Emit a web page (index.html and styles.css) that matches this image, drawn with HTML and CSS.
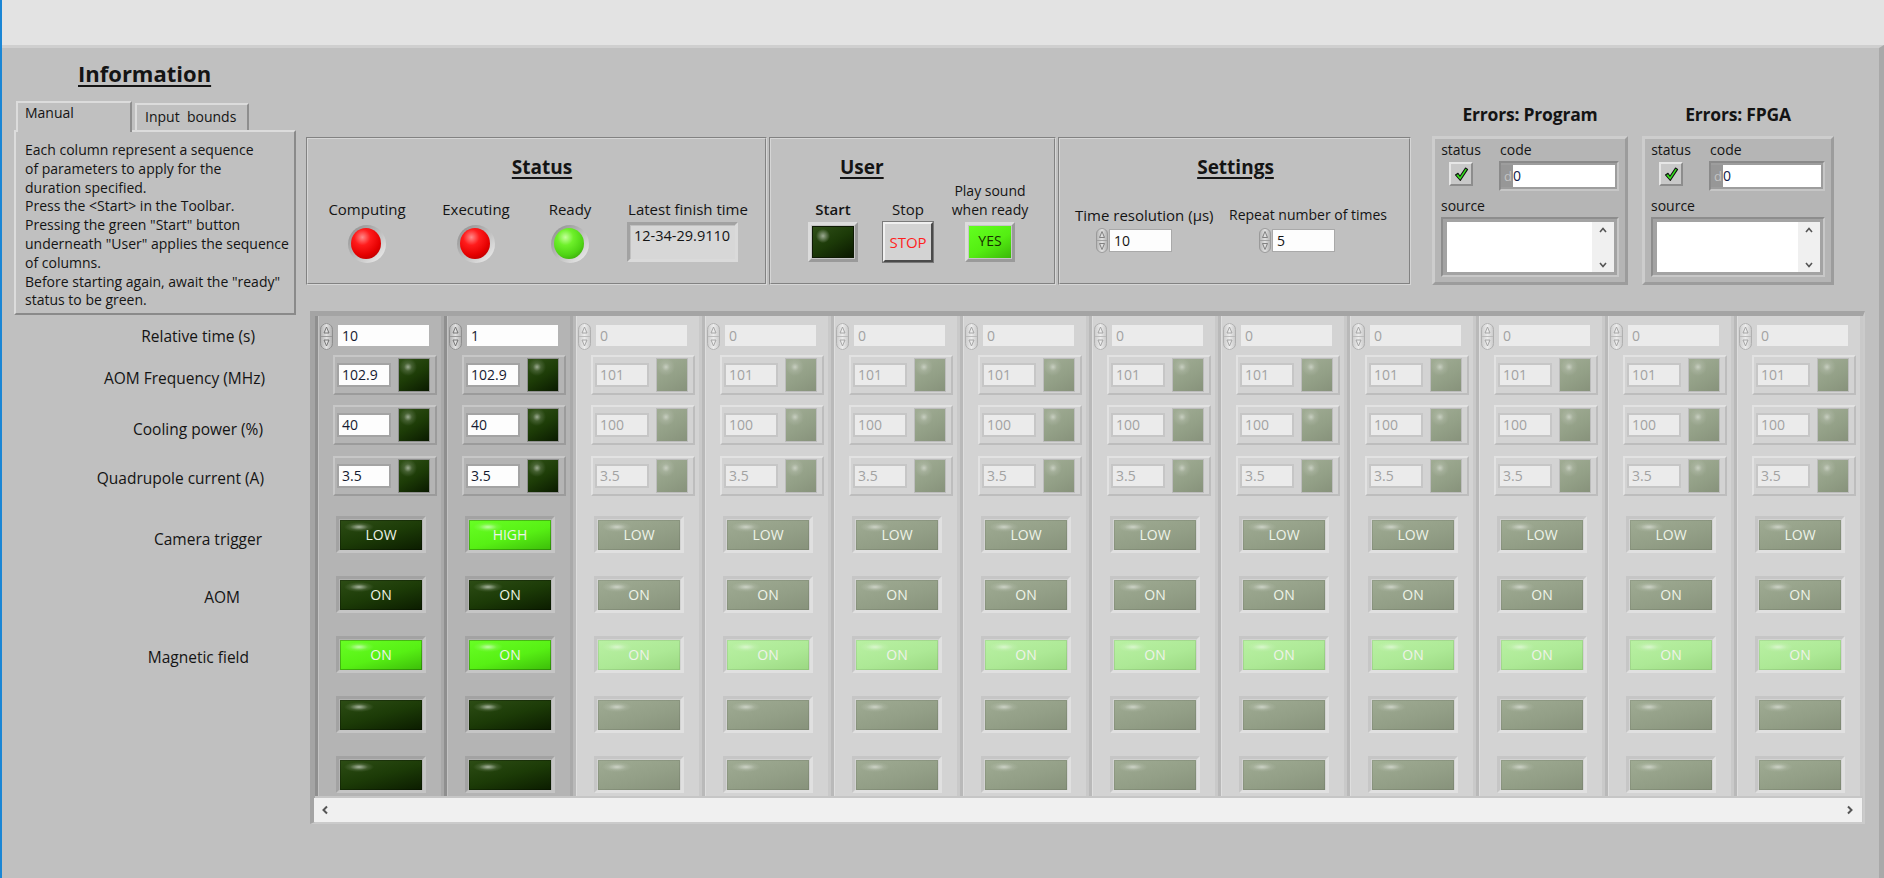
FILE: index.html
```html
<!DOCTYPE html>
<html>
<head>
<meta charset="utf-8">
<title>Sequencer</title>
<link rel="stylesheet" href="styles.css">
</head>
<body>
<div class="edge"></div>
<div class="app">
  <div class="titlebar"></div>
  <div class="panel">
    <div class="top">
      <section class="info">
        <h1>Information</h1>
        <div class="tabs">
          <div class="tab active">Manual</div>
          <div class="tab inactive">Input&nbsp; bounds</div>
        </div>
        <div class="tabpanel">Each column represent a sequence<br>of parameters to apply for the<br>duration specified.<br>Press the &lt;Start&gt; in the Toolbar.<br>Pressing the green "Start" button<br>underneath "User" applies the sequence<br>of columns.<br>Before starting again, await the "ready"<br>status to be green.</div>
      </section>

      <div class="groups">
        <section class="group status">
          <h2>Status</h2>
          <div class="status-items">
            <div class="sitem w1"><div class="slabel">Computing</div><div class="bezel"><div class="led red"></div></div></div>
            <div class="sitem w2"><div class="slabel">Executing</div><div class="bezel"><div class="led red"></div></div></div>
            <div class="sitem w3"><div class="slabel">Ready</div><div class="bezel"><div class="led green"></div></div></div>
            <div class="sitem w4"><div class="slabel">Latest finish time</div><div class="display">12-34-29.9110</div></div>
          </div>
        </section>
        <section class="group user">
          <h2>User</h2>
          <div class="user-items">
            <div class="uitem u1"><div class="ulabel"><span class="strong">Start</span></div><div class="ubtn startbtn"><div class="startface"></div></div></div>
            <div class="uitem u2"><div class="ulabel">Stop</div><div class="ubtn stopbtn">STOP</div></div>
            <div class="uitem u3"><div class="ulabel small">Play sound<br>when ready</div><div class="ubtn yesbtn"><div class="yesface">YES</div></div></div>
          </div>
        </section>
        <section class="group settings">
          <h2>Settings</h2>
          <div class="set-items">
            <div class="setcell a">
              <div class="setlabel">Time resolution (µs)</div>
              <div class="spinctl"><span class="spin sm"><svg width="12" height="25" viewBox="0 0 12 25"><rect x=".5" y=".5" width="11" height="24" rx="5.5" fill="none" stroke="#9a9a9a"/><path d="M6 3.5 L8.5 9.5 H3.5 Z M6 21.5 L8.5 15.5 H3.5 Z" fill="none" stroke="#777" stroke-width=".9"/><path d="M1 12.5 H11" stroke="#a2a2a2"/></svg></span><div class="setfield">10</div></div>
            </div>
            <div class="setcell b">
              <div class="setlabel narrow">Repeat number of times</div>
              <div class="spinctl"><span class="spin sm"><svg width="12" height="25" viewBox="0 0 12 25"><rect x=".5" y=".5" width="11" height="24" rx="5.5" fill="none" stroke="#9a9a9a"/><path d="M6 3.5 L8.5 9.5 H3.5 Z M6 21.5 L8.5 15.5 H3.5 Z" fill="none" stroke="#777" stroke-width=".9"/><path d="M1 12.5 H11" stroke="#a2a2a2"/></svg></span><div class="setfield">5</div></div>
            </div>
          </div>
        </section>
      </div>

      <div class="errors">
        <section class="err e1">
          <div class="errtitle">Errors: Program</div>
          <div class="errbox">
            <div class="errtop">
              <div class="stcol"><div class="elabel">status</div><div class="check"><svg width="16" height="16" viewBox="0 0 16 16"><path d="M2.5 9 L5 7.3 L7 10.3 L12.5 2 L14.6 3.4 L7.3 14.5 Z" fill="#33e41c" stroke="#111" stroke-width="1.1" stroke-linejoin="round"/></svg></div></div>
              <div class="codecol"><div class="elabel">code</div><div class="codefield"><span class="radix">d</span><span class="codeval">0</span></div></div>
            </div>
            <div class="elabel src">source</div>
            <div class="srcframe"><div class="srcwhite"></div><div class="srcscroll"><svg width="10" height="8" viewBox="0 0 10 8"><path d="M2 6 L5 2.5 L8 6" fill="none" stroke="#555" stroke-width="1.6"/></svg><svg width="10" height="8" viewBox="0 0 10 8"><path d="M2 2 L5 5.5 L8 2" fill="none" stroke="#555" stroke-width="1.6"/></svg></div></div>
          </div>
        </section>
        <section class="err e2">
          <div class="errtitle">Errors: FPGA</div>
          <div class="errbox">
            <div class="errtop">
              <div class="stcol"><div class="elabel">status</div><div class="check"><svg width="16" height="16" viewBox="0 0 16 16"><path d="M2.5 9 L5 7.3 L7 10.3 L12.5 2 L14.6 3.4 L7.3 14.5 Z" fill="#33e41c" stroke="#111" stroke-width="1.1" stroke-linejoin="round"/></svg></div></div>
              <div class="codecol"><div class="elabel">code</div><div class="codefield"><span class="radix">d</span><span class="codeval">0</span></div></div>
            </div>
            <div class="elabel src">source</div>
            <div class="srcframe"><div class="srcwhite"></div><div class="srcscroll"><svg width="10" height="8" viewBox="0 0 10 8"><path d="M2 6 L5 2.5 L8 6" fill="none" stroke="#555" stroke-width="1.6"/></svg><svg width="10" height="8" viewBox="0 0 10 8"><path d="M2 2 L5 5.5 L8 2" fill="none" stroke="#555" stroke-width="1.6"/></svg></div></div>
          </div>
        </section>
      </div>
    </div>

    <div class="bottom">
      <div class="labels">
        <div class="rowlabel l1">Relative time (s)</div>
        <div class="rowlabel l2">AOM Frequency (MHz)</div>
        <div class="rowlabel l3">Cooling power (%)</div>
        <div class="rowlabel l4">Quadrupole current (A)</div>
        <div class="rowlabel l5">Camera trigger</div>
        <div class="rowlabel l6">AOM</div>
        <div class="rowlabel l7">Magnetic field</div>
      </div>

      <div class="table">
        <div class="cols">
          <!-- column 1 -->
          <div class="col">
            <div class="rt"><span class="spin"><svg width="13" height="27" viewBox="0 0 13 27"><rect x=".5" y=".5" width="12" height="26" rx="6" fill="none" stroke="#8f8f8f"/><path d="M6.5 4 L9 10 H4 Z M6.5 23 L9 17 H4 Z" fill="none" stroke="#6e6e6e" stroke-width=".9"/><path d="M1 13.5 H12" stroke="#999"/></svg></span><div class="field">10</div></div>
            <div class="sub s1"><div class="num">102.9</div><div class="ind"></div></div>
            <div class="sub s2"><div class="num">40</div><div class="ind"></div></div>
            <div class="sub s3"><div class="num">3.5</div><div class="ind"></div></div>
            <div class="bf b1"><div class="btn">LOW</div></div>
            <div class="bf"><div class="btn">ON</div></div>
            <div class="bf"><div class="btn lit">ON</div></div>
            <div class="bf"><div class="btn"></div></div>
            <div class="bf"><div class="btn"></div></div>
          </div>
          <!-- column 2 -->
          <div class="col">
            <div class="rt"><span class="spin"><svg width="13" height="27" viewBox="0 0 13 27"><rect x=".5" y=".5" width="12" height="26" rx="6" fill="none" stroke="#8f8f8f"/><path d="M6.5 4 L9 10 H4 Z M6.5 23 L9 17 H4 Z" fill="none" stroke="#6e6e6e" stroke-width=".9"/><path d="M1 13.5 H12" stroke="#999"/></svg></span><div class="field">1</div></div>
            <div class="sub s1"><div class="num">102.9</div><div class="ind"></div></div>
            <div class="sub s2"><div class="num">40</div><div class="ind"></div></div>
            <div class="sub s3"><div class="num">3.5</div><div class="ind"></div></div>
            <div class="bf b1"><div class="btn lit">HIGH</div></div>
            <div class="bf"><div class="btn">ON</div></div>
            <div class="bf"><div class="btn lit">ON</div></div>
            <div class="bf"><div class="btn"></div></div>
            <div class="bf"><div class="btn"></div></div>
          </div>
          <!-- column 3 -->
          <div class="col off">
            <div class="rt"><span class="spin"><svg width="13" height="27" viewBox="0 0 13 27"><rect x=".5" y=".5" width="12" height="26" rx="6" fill="none" stroke="#b0b0b0"/><path d="M6.5 4 L9 10 H4 Z M6.5 23 L9 17 H4 Z" fill="none" stroke="#a0a0a0" stroke-width=".9"/><path d="M1 13.5 H12" stroke="#bbb"/></svg></span><div class="field">0</div></div>
            <div class="sub s1"><div class="num">101</div><div class="ind"></div></div>
            <div class="sub s2"><div class="num">100</div><div class="ind"></div></div>
            <div class="sub s3"><div class="num">3.5</div><div class="ind"></div></div>
            <div class="bf b1"><div class="btn">LOW</div></div>
            <div class="bf"><div class="btn">ON</div></div>
            <div class="bf"><div class="btn lit">ON</div></div>
            <div class="bf"><div class="btn"></div></div>
            <div class="bf"><div class="btn"></div></div>
          </div>
          <!-- column 4 -->
          <div class="col off">
            <div class="rt"><span class="spin"><svg width="13" height="27" viewBox="0 0 13 27"><rect x=".5" y=".5" width="12" height="26" rx="6" fill="none" stroke="#b0b0b0"/><path d="M6.5 4 L9 10 H4 Z M6.5 23 L9 17 H4 Z" fill="none" stroke="#a0a0a0" stroke-width=".9"/><path d="M1 13.5 H12" stroke="#bbb"/></svg></span><div class="field">0</div></div>
            <div class="sub s1"><div class="num">101</div><div class="ind"></div></div>
            <div class="sub s2"><div class="num">100</div><div class="ind"></div></div>
            <div class="sub s3"><div class="num">3.5</div><div class="ind"></div></div>
            <div class="bf b1"><div class="btn">LOW</div></div>
            <div class="bf"><div class="btn">ON</div></div>
            <div class="bf"><div class="btn lit">ON</div></div>
            <div class="bf"><div class="btn"></div></div>
            <div class="bf"><div class="btn"></div></div>
          </div>
          <!-- column 5 -->
          <div class="col off">
            <div class="rt"><span class="spin"><svg width="13" height="27" viewBox="0 0 13 27"><rect x=".5" y=".5" width="12" height="26" rx="6" fill="none" stroke="#b0b0b0"/><path d="M6.5 4 L9 10 H4 Z M6.5 23 L9 17 H4 Z" fill="none" stroke="#a0a0a0" stroke-width=".9"/><path d="M1 13.5 H12" stroke="#bbb"/></svg></span><div class="field">0</div></div>
            <div class="sub s1"><div class="num">101</div><div class="ind"></div></div>
            <div class="sub s2"><div class="num">100</div><div class="ind"></div></div>
            <div class="sub s3"><div class="num">3.5</div><div class="ind"></div></div>
            <div class="bf b1"><div class="btn">LOW</div></div>
            <div class="bf"><div class="btn">ON</div></div>
            <div class="bf"><div class="btn lit">ON</div></div>
            <div class="bf"><div class="btn"></div></div>
            <div class="bf"><div class="btn"></div></div>
          </div>
          <!-- column 6 -->
          <div class="col off">
            <div class="rt"><span class="spin"><svg width="13" height="27" viewBox="0 0 13 27"><rect x=".5" y=".5" width="12" height="26" rx="6" fill="none" stroke="#b0b0b0"/><path d="M6.5 4 L9 10 H4 Z M6.5 23 L9 17 H4 Z" fill="none" stroke="#a0a0a0" stroke-width=".9"/><path d="M1 13.5 H12" stroke="#bbb"/></svg></span><div class="field">0</div></div>
            <div class="sub s1"><div class="num">101</div><div class="ind"></div></div>
            <div class="sub s2"><div class="num">100</div><div class="ind"></div></div>
            <div class="sub s3"><div class="num">3.5</div><div class="ind"></div></div>
            <div class="bf b1"><div class="btn">LOW</div></div>
            <div class="bf"><div class="btn">ON</div></div>
            <div class="bf"><div class="btn lit">ON</div></div>
            <div class="bf"><div class="btn"></div></div>
            <div class="bf"><div class="btn"></div></div>
          </div>
          <!-- column 7 -->
          <div class="col off">
            <div class="rt"><span class="spin"><svg width="13" height="27" viewBox="0 0 13 27"><rect x=".5" y=".5" width="12" height="26" rx="6" fill="none" stroke="#b0b0b0"/><path d="M6.5 4 L9 10 H4 Z M6.5 23 L9 17 H4 Z" fill="none" stroke="#a0a0a0" stroke-width=".9"/><path d="M1 13.5 H12" stroke="#bbb"/></svg></span><div class="field">0</div></div>
            <div class="sub s1"><div class="num">101</div><div class="ind"></div></div>
            <div class="sub s2"><div class="num">100</div><div class="ind"></div></div>
            <div class="sub s3"><div class="num">3.5</div><div class="ind"></div></div>
            <div class="bf b1"><div class="btn">LOW</div></div>
            <div class="bf"><div class="btn">ON</div></div>
            <div class="bf"><div class="btn lit">ON</div></div>
            <div class="bf"><div class="btn"></div></div>
            <div class="bf"><div class="btn"></div></div>
          </div>
          <!-- column 8 -->
          <div class="col off">
            <div class="rt"><span class="spin"><svg width="13" height="27" viewBox="0 0 13 27"><rect x=".5" y=".5" width="12" height="26" rx="6" fill="none" stroke="#b0b0b0"/><path d="M6.5 4 L9 10 H4 Z M6.5 23 L9 17 H4 Z" fill="none" stroke="#a0a0a0" stroke-width=".9"/><path d="M1 13.5 H12" stroke="#bbb"/></svg></span><div class="field">0</div></div>
            <div class="sub s1"><div class="num">101</div><div class="ind"></div></div>
            <div class="sub s2"><div class="num">100</div><div class="ind"></div></div>
            <div class="sub s3"><div class="num">3.5</div><div class="ind"></div></div>
            <div class="bf b1"><div class="btn">LOW</div></div>
            <div class="bf"><div class="btn">ON</div></div>
            <div class="bf"><div class="btn lit">ON</div></div>
            <div class="bf"><div class="btn"></div></div>
            <div class="bf"><div class="btn"></div></div>
          </div>
          <!-- column 9 -->
          <div class="col off">
            <div class="rt"><span class="spin"><svg width="13" height="27" viewBox="0 0 13 27"><rect x=".5" y=".5" width="12" height="26" rx="6" fill="none" stroke="#b0b0b0"/><path d="M6.5 4 L9 10 H4 Z M6.5 23 L9 17 H4 Z" fill="none" stroke="#a0a0a0" stroke-width=".9"/><path d="M1 13.5 H12" stroke="#bbb"/></svg></span><div class="field">0</div></div>
            <div class="sub s1"><div class="num">101</div><div class="ind"></div></div>
            <div class="sub s2"><div class="num">100</div><div class="ind"></div></div>
            <div class="sub s3"><div class="num">3.5</div><div class="ind"></div></div>
            <div class="bf b1"><div class="btn">LOW</div></div>
            <div class="bf"><div class="btn">ON</div></div>
            <div class="bf"><div class="btn lit">ON</div></div>
            <div class="bf"><div class="btn"></div></div>
            <div class="bf"><div class="btn"></div></div>
          </div>
          <!-- column 10 -->
          <div class="col off">
            <div class="rt"><span class="spin"><svg width="13" height="27" viewBox="0 0 13 27"><rect x=".5" y=".5" width="12" height="26" rx="6" fill="none" stroke="#b0b0b0"/><path d="M6.5 4 L9 10 H4 Z M6.5 23 L9 17 H4 Z" fill="none" stroke="#a0a0a0" stroke-width=".9"/><path d="M1 13.5 H12" stroke="#bbb"/></svg></span><div class="field">0</div></div>
            <div class="sub s1"><div class="num">101</div><div class="ind"></div></div>
            <div class="sub s2"><div class="num">100</div><div class="ind"></div></div>
            <div class="sub s3"><div class="num">3.5</div><div class="ind"></div></div>
            <div class="bf b1"><div class="btn">LOW</div></div>
            <div class="bf"><div class="btn">ON</div></div>
            <div class="bf"><div class="btn lit">ON</div></div>
            <div class="bf"><div class="btn"></div></div>
            <div class="bf"><div class="btn"></div></div>
          </div>
          <!-- column 11 -->
          <div class="col off">
            <div class="rt"><span class="spin"><svg width="13" height="27" viewBox="0 0 13 27"><rect x=".5" y=".5" width="12" height="26" rx="6" fill="none" stroke="#b0b0b0"/><path d="M6.5 4 L9 10 H4 Z M6.5 23 L9 17 H4 Z" fill="none" stroke="#a0a0a0" stroke-width=".9"/><path d="M1 13.5 H12" stroke="#bbb"/></svg></span><div class="field">0</div></div>
            <div class="sub s1"><div class="num">101</div><div class="ind"></div></div>
            <div class="sub s2"><div class="num">100</div><div class="ind"></div></div>
            <div class="sub s3"><div class="num">3.5</div><div class="ind"></div></div>
            <div class="bf b1"><div class="btn">LOW</div></div>
            <div class="bf"><div class="btn">ON</div></div>
            <div class="bf"><div class="btn lit">ON</div></div>
            <div class="bf"><div class="btn"></div></div>
            <div class="bf"><div class="btn"></div></div>
          </div>
          <!-- column 12 -->
          <div class="col off">
            <div class="rt"><span class="spin"><svg width="13" height="27" viewBox="0 0 13 27"><rect x=".5" y=".5" width="12" height="26" rx="6" fill="none" stroke="#b0b0b0"/><path d="M6.5 4 L9 10 H4 Z M6.5 23 L9 17 H4 Z" fill="none" stroke="#a0a0a0" stroke-width=".9"/><path d="M1 13.5 H12" stroke="#bbb"/></svg></span><div class="field">0</div></div>
            <div class="sub s1"><div class="num">101</div><div class="ind"></div></div>
            <div class="sub s2"><div class="num">100</div><div class="ind"></div></div>
            <div class="sub s3"><div class="num">3.5</div><div class="ind"></div></div>
            <div class="bf b1"><div class="btn">LOW</div></div>
            <div class="bf"><div class="btn">ON</div></div>
            <div class="bf"><div class="btn lit">ON</div></div>
            <div class="bf"><div class="btn"></div></div>
            <div class="bf"><div class="btn"></div></div>
          </div>
        </div>
        <div class="hscroll">
          <svg width="8" height="10" viewBox="0 0 8 10"><path d="M6 1.5 L2.5 5 L6 8.5" fill="none" stroke="#555" stroke-width="2"/></svg>
          <svg width="8" height="10" viewBox="0 0 8 10"><path d="M2 1.5 L5.5 5 L2 8.5" fill="none" stroke="#555" stroke-width="2"/></svg>
        </div>
      </div>
    </div>
  </div>
</div>
</body>
</html>
```

FILE: styles.css
```css
* { box-sizing: border-box; }
html, body { margin: 0; }
body {
  width: 1884px;
  height: 878px;
  overflow: hidden;
  display: flex;
  background: #e3e3e3;
  font-family: "Open Sans", "Noto Sans", sans-serif;
  color: #141414;
}
.edge { width: 2px; flex: none; background: #1a86d5; }
.app { flex: 1; display: flex; flex-direction: column; min-width: 0; }
.titlebar { height: 45px; flex: none; background: #e3e3e3; }
.panel {
  flex: 1;
  background: #c0c0c0;
  border-top: 3px solid #cfcfcf;
  border-right: 5px solid #a9a9a9;
  display: flex;
  flex-direction: column;
}

/* ---------- top row ---------- */
.top { height: 263px; flex: none; display: flex; align-items: flex-start; }

.info { width: 282px; margin-left: 12px; flex: none; }
.info h1 {
  margin: 12px 0 0;
  padding-left: 64px;
  font-size: 22px;
  line-height: 26px;
  font-weight: 700;
  text-decoration: underline;
  text-decoration-thickness: 2px;
  text-underline-offset: 3px;
}
.tabs { margin-top: 15px; height: 29px; display: flex; align-items: flex-end; gap: 3px; padding-left: 2px; }
.tab {
  background: #c0c0c0;
  border: 2px solid;
  border-color: #dcdcdc #8e8e8e transparent #dcdcdc;
  border-bottom: none;
  font-size: 14px;
  line-height: 18px;
  white-space: nowrap;
}
.tab.active { width: 116px; height: 31px; margin-bottom: -2px; padding: 1px 0 0 7px; position: relative; z-index: 1; }
.tab.inactive { width: 114px; height: 27px; padding: 3px 0 0 8px; }
.tabpanel {
  height: 185px;
  background: #c0c0c0;
  border: 2px solid;
  border-color: #dcdcdc #8a8a8a #8a8a8a #dcdcdc;
  padding: 9px 4px 0 9px;
  font-size: 14px;
  line-height: 18.8px;
  white-space: nowrap;
}

.groups { display: flex; gap: 2px; margin: 89px 0 0 10px; flex: none; }
.group { height: 148px; border: 2px groove #d6d6d6; }
.group h2 {
  margin: 0;
  padding-top: 16px;
  font-size: 19px;
  line-height: 24px;
  font-weight: 700;
  text-decoration: underline;
  text-decoration-thickness: 2px;
  text-underline-offset: 3px;
}
.status { width: 461px; }
.status h2 { text-align: center; padding-left: 11px; }
.user { width: 287px; }
.user h2 { padding-left: 69px; }
.settings { width: 353px; }
.settings h2 { text-align: center; padding-left: 2px; }

.status-items { display: flex; margin-top: 20px; }
.sitem { display: flex; flex-direction: column; align-items: center; }
.sitem.w1 { width: 118px; }
.sitem.w2 { width: 100px; }
.sitem.w3 { width: 88px; }
.sitem.w4 { width: 148px; }
.slabel { font-size: 15px; line-height: 20px; white-space: nowrap; }
.bezel {
  margin-top: 6px;
  width: 38px; height: 38px;
  border-radius: 50%;
  background: linear-gradient(135deg, #8a8a8a 0%, #b7b7b7 45%, #f3f3f3 100%);
  display: flex; align-items: center; justify-content: center;
}
.led { width: 30px; height: 31px; border-radius: 50%; margin: -2px 0 0 -2px; }
.led.red { background: radial-gradient(circle at 38% 30%, #ff8a8a 0, #ff1c1c 28%, #e50000 62%, #9c0000 100%); }
.led.green { background: radial-gradient(circle at 38% 30%, #c5ff9c 0, #6ef02a 28%, #4fd414 62%, #2f8d06 100%); }
.display {
  margin: 3px 0 0 13px;
  align-self: flex-start;
  width: 111px; height: 40px;
  border: 3px solid;
  border-color: #a2a2a2 #dadada #dadada #a2a2a2;
  background: #d7d7d7;
  box-shadow: inset 1px 1px 0 #c0c0c0;
  padding: 1px 0 0 4px;
  font-size: 14.5px;
  line-height: 20px;
}

.user-items { display: flex; padding-left: 28px; }
.uitem { display: flex; flex-direction: column; align-items: center; }
.uitem.u1 { width: 68px; }
.uitem.u2 { width: 82px; }
.uitem.u3 { width: 82px; }
.ulabel { height: 40px; display: flex; flex-direction: column; justify-content: flex-end; text-align: center; font-size: 15px; line-height: 19px; white-space: nowrap; }
.ulabel.small { font-size: 14px; }
.strong { font-weight: 600; }
.ubtn { margin-top: 3px; width: 50px; height: 40px; }
.startbtn { background: #c6c6c6; border: 3px solid; border-color: #dcdcdc #9a9a9a #9a9a9a #dcdcdc; padding: 1px; }
.startface {
  width: 100%; height: 100%;
  border: 1px solid #0e1a04;
  background:
    radial-gradient(circle at 10px 9px, rgba(255,255,255,.55) 0, rgba(255,255,255,0) 7px),
    linear-gradient(150deg, #2f4f18 0%, #1c3a08 50%, #0a1800 100%);
}
.stopbtn {
  background: #d3d3d3;
  border: 2px solid;
  border-color: #f0f0f0 #4a4a4a #4a4a4a #f0f0f0;
  box-shadow: 0 0 0 1px #7a7a7a;
  color: #ff1f1f;
  font-size: 15px;
  line-height: 36px;
  text-align: center;
}
.yesbtn { background: #c6c6c6; border: 3px solid; border-color: #dcdcdc #9a9a9a #9a9a9a #dcdcdc; padding: 1px; }
.yesface {
  width: 100%; height: 100%;
  background: linear-gradient(150deg, #63ff1f 0%, #54ee12 55%, #3bb808 100%);
  color: #183000;
  font-size: 14px;
  line-height: 30px;
  text-align: center;
}

.set-items { display: flex; padding-left: 15px; margin-top: 26px; }
.setcell.a { width: 154px; }
.setcell.b { width: 160px; }
.setlabel { font-size: 15px; line-height: 20px; white-space: nowrap; }
.setlabel.narrow { font-size: 14px; }
.spinctl { margin-top: 3px; display: flex; align-items: center; gap: 2px; }
.setcell.a .spinctl { padding-left: 21px; }
.setcell.b .spinctl { padding-left: 30px; }
.spin { display: block; flex: none; width: 13px; height: 27px; border-radius: 6px; background: linear-gradient(90deg, #aeaeae, #e2e2e2 50%, #aaaaaa); }
.off .spin { background: linear-gradient(90deg, #c9c9c9, #ececec 50%, #c6c6c6); }
.spin svg { display: block; }
.spin.sm { width: 12px; height: 25px; }
.setfield { width: 61px; height: 21px; background: #fdfdfd; box-shadow: 0 0 0 1px #a9a9a9; font-size: 14px; line-height: 21px; padding-left: 4px; }

/* errors */
.errors { display: flex; gap: 14px; margin-left: 21px; flex: none; }
.err.e1 { width: 196px; }
.err.e2 { width: 192px; }
.errtitle { margin-top: 55px; text-align: center; font-size: 17.5px; line-height: 22px; font-weight: 700; letter-spacing: -0.2px; white-space: nowrap; }
.errbox {
  margin-top: 11px;
  height: 149px;
  background: #b5b5b5;
  border: 3px solid;
  border-color: #cdcdcd #9c9c9c #9c9c9c #cdcdcd;
  padding: 2px 6px 0 3px;
}
.errtop { display: flex; }
.stcol { width: 40px; margin-left: 3px; display: flex; flex-direction: column; align-items: center; }
.codecol { flex: 1; margin-left: 18px; }
.elabel { font-size: 14px; line-height: 18px; }
.codecol .elabel { padding-left: 1px; }
.check {
  margin-top: 3px;
  width: 24px; height: 24px;
  background: #c9c9c9;
  border: 2px solid;
  border-color: #e6e6e6 #8d8d8d #8d8d8d #e6e6e6;
  display: flex; align-items: center; justify-content: center;
}
.codefield {
  margin-top: 2px;
  height: 30px;
  background: #9d9d9d;
  border: 2px solid;
  border-color: #8a8a8a #c6c6c6 #c6c6c6 #8a8a8a;
  padding: 2px 2px 2px 0;
  display: flex;
}
.radix { width: 12px; color: #c4c4c4; font-size: 13px; line-height: 22px; text-align: right; padding-right: 1px; background: #979797; }
.codeval { flex: 1; background: #fff; font-size: 14px; line-height: 22px; color: #10204a; }
.elabel.src { margin-top: 6px; padding-left: 3px; }
.srcframe {
  margin: 2px 0 0 3px;
  height: 60px;
  background: #a3a3a3;
  border: 2px solid;
  border-color: #8d8d8d #c8c8c8 #c8c8c8 #8d8d8d;
  padding: 3px 3px 3px 4px;
  display: flex;
}
.srcwhite { flex: 1; background: #fff; }
.srcscroll { width: 22px; background: #f0f0f0; display: flex; flex-direction: column; justify-content: space-between; align-items: center; padding: 4px 0 3px; }
.srcscroll svg { display: block; }

/* ---------- bottom ---------- */
.bottom { display: flex; flex: none; height: 567px; }
.labels { width: 308px; flex: none; text-align: right; font-size: 15.5px; line-height: 20px; }
.rowlabel { white-space: nowrap; }
.l1 { margin-top: 15px; padding-right: 55px; }
.l2 { margin-top: 22px; padding-right: 45px; }
.l3 { margin-top: 31px; padding-right: 47px; }
.l4 { margin-top: 29px; padding-right: 46px; }
.l5 { margin-top: 41px; padding-right: 48px; }
.l6 { margin-top: 38px; padding-right: 70px; }
.l7 { margin-top: 40px; padding-right: 61px; }

.table {
  width: 1555px;
  height: 513px;
  flex: none;
  border-top: 5px solid #a4a4a4;
  border-left: 5px solid #a4a4a4;
  border-right: 2px solid #cbcbcb;
  border-bottom: 2px solid #cbcbcb;
  background: #c6c6c6;
}
.cols { display: flex; height: 480px; }
.col {
  width: 129px;
  flex: none;
  background: #b4b4b4;
  border-left: 3px solid #8f8f8f;
  box-shadow: inset 1px 0 0 #c4c4c4, inset -3px 0 0 #a9a9a9;
  padding: 7px 0 0 2px;
}
.col.off { background: #d3d3d3; border-left-color: #b9b9b9; box-shadow: inset 1px 0 0 #dedede, inset -3px 0 0 #c9c9c9; }

.rt { display: flex; align-items: flex-start; height: 27px; }
.field { margin: 2px 0 0 5px; width: 91px; height: 21px; background: #fdfdfd; font-size: 14px; line-height: 21px; padding-left: 4px; color: #151a30; }
.off .field { background: #ebebeb; color: #a2a2a2; }

.sub {
  margin: 10px 0 0 13px;
  width: 104px; height: 40px;
  border: 2px solid;
  border-color: #c7c7c7 #9b9b9b #9b9b9b #c7c7c7;
  display: flex; align-items: center;
  padding-left: 4px; gap: 10px;
}
.sub.s1 { margin-top: 5px; }
.sub.s3 { margin-top: 11px; }
.off .sub { border-color: #e2e2e2 #bdbdbd #bdbdbd #e2e2e2; }
.num { width: 50px; height: 20px; background: #fdfdfd; box-shadow: 0 0 0 2px #a3a3a3; font-size: 14px; line-height: 20px; padding-left: 3px; color: #151a30; }
.off .num { background: #ebebeb; box-shadow: 0 0 0 2px #c6c6c6; color: #a2a2a2; }
.ind {
  width: 30px; height: 32px;
  box-shadow: 0 0 0 1px #8f8f8f;
  background:
    radial-gradient(circle at 9px 8px, rgba(255,255,255,.55) 0, rgba(255,255,255,.15) 4px, rgba(255,255,255,0) 9px),
    linear-gradient(150deg, #2f5016 0%, #1d3c07 50%, #0a1a00 100%);
}
.off .ind {
  box-shadow: 0 0 0 1px #bdbdbd;
  background:
    radial-gradient(circle at 9px 8px, rgba(255,255,255,.45) 0, rgba(255,255,255,.12) 4px, rgba(255,255,255,0) 9px),
    linear-gradient(150deg, #a0ac94 0%, #93a087 55%, #87927b 100%);
}

.bf {
  margin: 23px 0 0 16px;
  width: 90px; height: 37px;
  border: 3px solid;
  border-color: #a3a3a3 #c5c5c5 #c5c5c5 #a3a3a3;
  padding: 1px 1px 0;
}
.bf.b1 { margin-top: 20px; }
.off .bf { border-color: #c6c6c6 #e0e0e0 #e0e0e0 #c6c6c6; }
.btn {
  width: 82px; height: 30px;
  color: #eef3e8;
  font-size: 14px;
  line-height: 30px;
  text-align: center;
  box-shadow: inset 0 0 0 1px rgba(0,0,0,.25);
  background:
    radial-gradient(ellipse 15px 5px at 19px 7px, rgba(255,255,255,.6), rgba(255,255,255,.12) 60%, rgba(255,255,255,0)),
    linear-gradient(165deg, #2d4d15 0%, #1c3b07 50%, #0b1c00 100%);
}
.btn.lit {
  background:
    radial-gradient(ellipse 15px 5px at 19px 7px, rgba(255,255,255,.6), rgba(255,255,255,.12) 60%, rgba(255,255,255,0)),
    linear-gradient(165deg, #68ff24 0%, #57f014 55%, #3cbd09 100%);
}
.off .btn {
  box-shadow: inset 0 0 0 1px rgba(0,0,0,.08);
  background:
    radial-gradient(ellipse 15px 5px at 19px 7px, rgba(255,255,255,.5), rgba(255,255,255,.1) 60%, rgba(255,255,255,0)),
    linear-gradient(165deg, #9fab93 0%, #939f87 55%, #87927b 100%);
}
.off .btn.lit {
  background:
    radial-gradient(ellipse 15px 5px at 19px 7px, rgba(255,255,255,.5), rgba(255,255,255,.1) 60%, rgba(255,255,255,0)),
    linear-gradient(165deg, #b9f1a3 0%, #ade996 55%, #9bd882 100%);
}

.hscroll {
  margin: 2px 1px 0 -1px;
  height: 24px;
  background: #f0f0f0;
  display: flex;
  justify-content: space-between;
  align-items: center;
  padding: 0 8px 0 7px;
}
.hscroll svg { display: block; }
```
